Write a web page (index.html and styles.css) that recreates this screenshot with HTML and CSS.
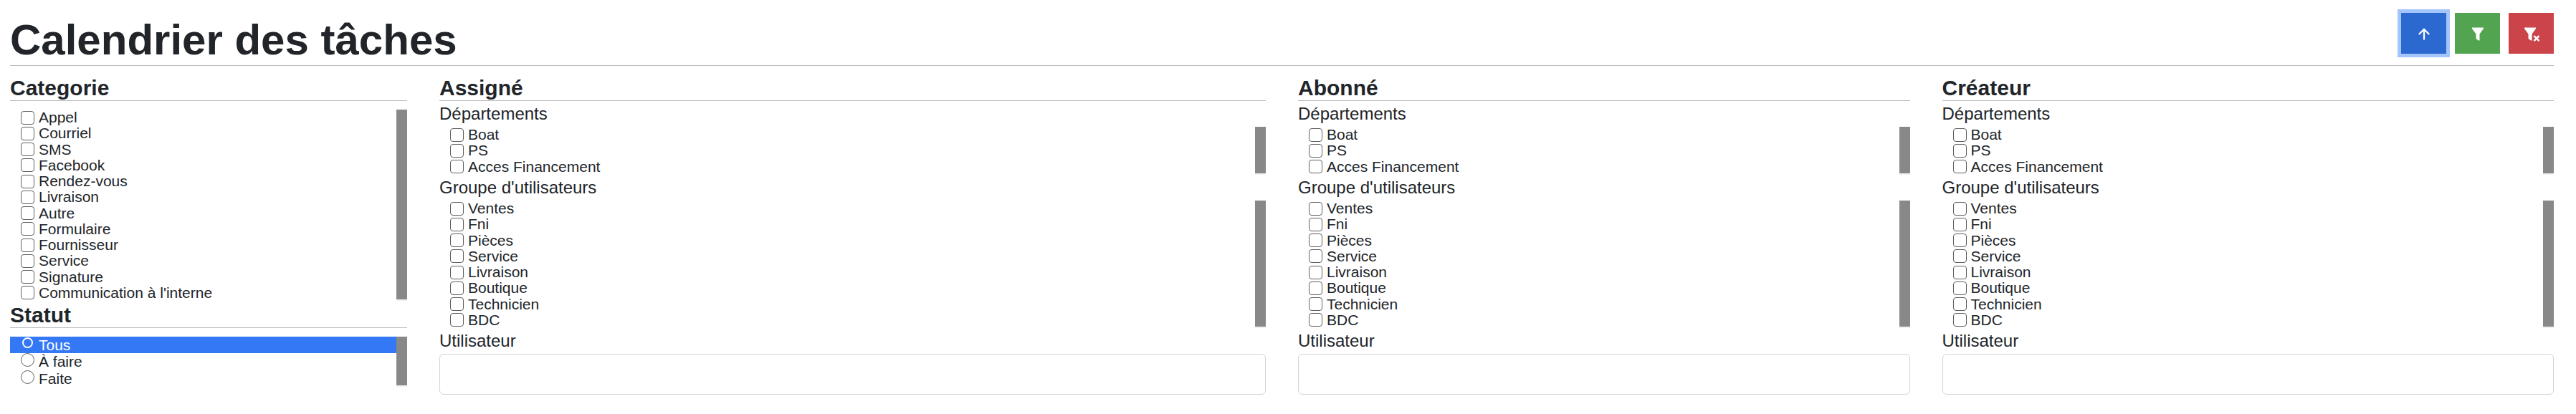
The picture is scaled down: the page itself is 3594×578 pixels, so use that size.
FILE: index.html
```html
<!DOCTYPE html>
<html lang="fr">
<head>
<meta charset="utf-8">
<title>Calendrier des tâches</title>
<link rel="stylesheet" href="styles.css">
</head>
<body>
<header class="page-header">
  <h1 class="page-title">Calendrier des tâches</h1>
  <div class="actions">
    <button type="button" class="btn btn-primary is-focused" aria-label="Masquer les filtres">
      <svg class="icon" viewBox="0 0 24 24" aria-hidden="true"><path d="M12 20.500V6M4.800 13 12 5.800l7.200 7.200" fill="none" stroke="currentColor" stroke-width="2.200"/></svg>
    </button>
    <button type="button" class="btn btn-success" aria-label="Filtrer">
      <svg class="icon" viewBox="0 0 24 24" aria-hidden="true"><path d="M4 3.500h16v1.500l-5.500 7.500v9H13l-3.500-2.500v-6.500L4 5z" fill="currentColor"/></svg>
    </button>
    <button type="button" class="btn btn-danger" aria-label="Effacer les filtres">
      <svg class="icon" viewBox="0 0 24 24" aria-hidden="true"><path d="M2 3.500h16v1.500l-5.500 7.500v9H11l-3.500-2.500v-6.500L2 5z" fill="currentColor"/><path d="m15.500 15.200 7 7M22.500 15.200l-7 7" fill="none" stroke="currentColor" stroke-width="2.400"/></svg>
    </button>
  </div>
</header>
<main class="filters">
  <div class="col col-2">
    <h3 class="section-title">Categorie</h3>
    <ul class="list list-spaced list-12">
      <li><label class="option"><input type="checkbox">Appel</label></li>
      <li><label class="option"><input type="checkbox">Courriel</label></li>
      <li><label class="option"><input type="checkbox">SMS</label></li>
      <li><label class="option"><input type="checkbox">Facebook</label></li>
      <li><label class="option"><input type="checkbox">Rendez-vous</label></li>
      <li><label class="option"><input type="checkbox">Livraison</label></li>
      <li><label class="option"><input type="checkbox">Autre</label></li>
      <li><label class="option"><input type="checkbox">Formulaire</label></li>
      <li><label class="option"><input type="checkbox">Fournisseur</label></li>
      <li><label class="option"><input type="checkbox">Service</label></li>
      <li><label class="option"><input type="checkbox">Signature</label></li>
      <li><label class="option"><input type="checkbox">Communication à l'interne</label></li>
    </ul>
    <h3 class="section-title">Statut</h3>
    <ul class="list list-spaced list-status">
      <li><label class="option is-selected"><input type="radio" name="statut">Tous</label></li>
      <li><label class="option"><input type="radio" name="statut">À faire</label></li>
      <li><label class="option"><input type="radio" name="statut">Faite</label></li>
    </ul>
  </div>
  <div class="col col-4">
    <h3 class="section-title">Assigné</h3>
    <h4 class="group-title">Départements</h4>
    <ul class="list list-3">
      <li><label class="option"><input type="checkbox">Boat</label></li>
      <li><label class="option"><input type="checkbox">PS</label></li>
      <li><label class="option"><input type="checkbox">Acces Financement</label></li>
    </ul>
    <h4 class="group-title">Groupe d'utilisateurs</h4>
    <ul class="list list-8">
      <li><label class="option"><input type="checkbox">Ventes</label></li>
      <li><label class="option"><input type="checkbox">Fni</label></li>
      <li><label class="option"><input type="checkbox">Pièces</label></li>
      <li><label class="option"><input type="checkbox">Service</label></li>
      <li><label class="option"><input type="checkbox">Livraison</label></li>
      <li><label class="option"><input type="checkbox">Boutique</label></li>
      <li><label class="option"><input type="checkbox">Technicien</label></li>
      <li><label class="option"><input type="checkbox">BDC</label></li>
    </ul>
    <label class="group-title" for="user-assigne">Utilisateur</label>
    <input class="field" type="text" id="user-assigne">
  </div>
  <div class="col col-3">
    <h3 class="section-title">Abonné</h3>
    <h4 class="group-title">Départements</h4>
    <ul class="list list-3">
      <li><label class="option"><input type="checkbox">Boat</label></li>
      <li><label class="option"><input type="checkbox">PS</label></li>
      <li><label class="option"><input type="checkbox">Acces Financement</label></li>
    </ul>
    <h4 class="group-title">Groupe d'utilisateurs</h4>
    <ul class="list list-8">
      <li><label class="option"><input type="checkbox">Ventes</label></li>
      <li><label class="option"><input type="checkbox">Fni</label></li>
      <li><label class="option"><input type="checkbox">Pièces</label></li>
      <li><label class="option"><input type="checkbox">Service</label></li>
      <li><label class="option"><input type="checkbox">Livraison</label></li>
      <li><label class="option"><input type="checkbox">Boutique</label></li>
      <li><label class="option"><input type="checkbox">Technicien</label></li>
      <li><label class="option"><input type="checkbox">BDC</label></li>
    </ul>
    <label class="group-title" for="user-abonne">Utilisateur</label>
    <input class="field" type="text" id="user-abonne">
  </div>
  <div class="col col-3">
    <h3 class="section-title">Créateur</h3>
    <h4 class="group-title">Départements</h4>
    <ul class="list list-3">
      <li><label class="option"><input type="checkbox">Boat</label></li>
      <li><label class="option"><input type="checkbox">PS</label></li>
      <li><label class="option"><input type="checkbox">Acces Financement</label></li>
    </ul>
    <h4 class="group-title">Groupe d'utilisateurs</h4>
    <ul class="list list-8">
      <li><label class="option"><input type="checkbox">Ventes</label></li>
      <li><label class="option"><input type="checkbox">Fni</label></li>
      <li><label class="option"><input type="checkbox">Pièces</label></li>
      <li><label class="option"><input type="checkbox">Service</label></li>
      <li><label class="option"><input type="checkbox">Livraison</label></li>
      <li><label class="option"><input type="checkbox">Boutique</label></li>
      <li><label class="option"><input type="checkbox">Technicien</label></li>
      <li><label class="option"><input type="checkbox">BDC</label></li>
    </ul>
    <label class="group-title" for="user-createur">Utilisateur</label>
    <input class="field" type="text" id="user-createur">
  </div>
</main>
</body>
</html>
```
FILE: styles.css
```css
* {
  box-sizing: border-box;
}

body {
  margin: 0;
  padding: 18px 31px 26px 14px;
  background: #fff;
  color: #212529;
  font-family: "Liberation Sans", Arial, sans-serif;
  font-size: 21px;
}

h1, h3, h4, ul {
  margin: 0;
  padding: 0;
}

.page-header {
  display: flex;
  justify-content: space-between;
  align-items: flex-start;
  padding-bottom: 1px;
  border-bottom: 1px solid #bbb;
}

.page-title {
  padding-top: 4px;
  font-size: 60px;
  line-height: 68px;
  font-weight: bold;
}

.actions {
  display: flex;
  gap: 12px;
}

.btn {
  display: flex;
  align-items: center;
  justify-content: center;
  width: 63px;
  height: 57px;
  padding: 0;
  border: 0;
  color: #fff;
}

.btn-primary { background: #2b68d0; }
.btn-success { background: #53a451; }
.btn-danger { background: #ca444a; }

.is-focused {
  box-shadow: 0 0 0 5px #a3c5fb;
}

.icon {
  width: 24px;
  height: 24px;
}

.filters {
  display: grid;
  grid-template-columns: repeat(12, minmax(0, 1fr));
  column-gap: 45px;
  padding-top: 12px;
}

.col-2 { grid-column: span 2; }
.col-3 { grid-column: span 3; }
.col-4 { grid-column: span 4; }

.section-title {
  padding-top: 2px;
  border-bottom: 1px solid #bbb;
  font-size: 30px;
  line-height: 34px;
  font-weight: bold;
}

.group-title {
  display: block;
  font-size: 24px;
  line-height: 36px;
  font-weight: normal;
}

/* The right-hand strip is the scroll thumb over its track. */
.list {
  display: grid;
  grid-auto-rows: 1fr;
  padding-right: 15px;
  background:
    linear-gradient(#888, #888) right top / 15px calc(100% - 2px) no-repeat,
    linear-gradient(#f1f1f1, #f1f1f1) right top / 15px 100% no-repeat;
  list-style: none;
}

.list-3 { height: 67px; }
.list-8 { height: 178px; }
.list-12 { height: 267px; }
.list-status { height: 70px; }

.list-spaced {
  margin-top: 12px;
}

.list-12 + .section-title {
  margin-top: 1px;
}

.option {
  display: flex;
  align-items: center;
  gap: 6px;
  height: 100%;
  padding-left: 15px;
  line-height: 22px;
}

.option input {
  appearance: none;
  width: 19px;
  height: 19px;
  margin: 0;
  border: 1px solid #606060;
  border-radius: 4px;
  background: #fff;
}

.list-status .option {
  align-items: flex-start;
  line-height: 23px;
}

.list-status .option input {
  border-radius: 50%;
}

.list-status .is-selected {
  background: #3478f6;
  color: #fff;
}

.list-status .is-selected input {
  width: 15px;
  height: 15px;
  margin: 1px 2px;
  border: 2px solid #fff;
  background: transparent;
}

.field {
  display: block;
  width: 100%;
  height: 57px;
  padding: 0 18px;
  border: 1px solid #ced4da;
  border-radius: 6px;
  background: #fff;
  font: inherit;
}
```
